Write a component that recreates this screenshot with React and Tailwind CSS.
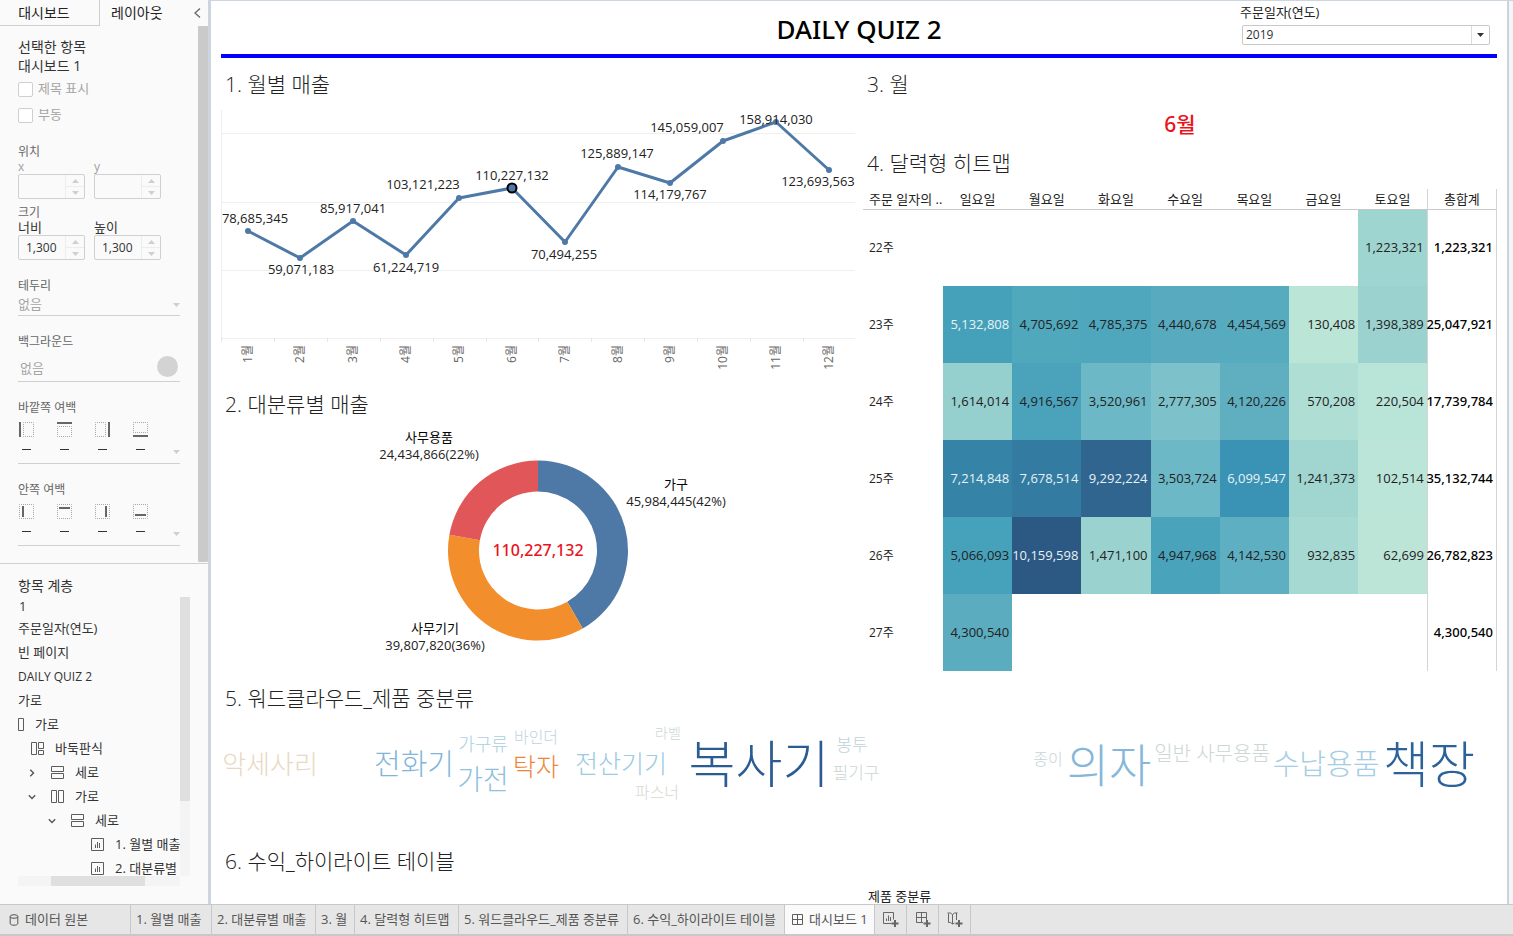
import React from "react";

const FONT = "font-['Open_Sans','Noto_Sans_CJK_KR',sans-serif]";
const MEDIUM = "font-['Noto_Sans','Noto_Sans_CJK_KR',sans-serif] font-medium";

/* ---------- data ---------- */

const MONTHS = [
  { x: 27, y: 121, label: "78,685,345", lx: 34, ly: 113 },
  { x: 79, y: 148, label: "59,071,183", lx: 80, ly: 164 },
  { x: 132, y: 111, label: "85,917,041", lx: 132, ly: 103 },
  { x: 185, y: 145, label: "61,224,719", lx: 185, ly: 162 },
  { x: 238, y: 88, label: "103,121,223", lx: 202, ly: 79 },
  { x: 291, y: 78, label: "110,227,132", lx: 291, ly: 70, selected: true },
  { x: 344, y: 132, label: "70,494,255", lx: 343, ly: 149 },
  { x: 397, y: 57, label: "125,889,147", lx: 396, ly: 48 },
  { x: 449, y: 73, label: "114,179,767", lx: 449, ly: 89 },
  { x: 502, y: 31, label: "145,059,007", lx: 466, ly: 22 },
  { x: 555, y: 12, label: "158,914,030", lx: 555, ly: 14 },
  { x: 608, y: 60, label: "123,693,563", lx: 597, ly: 76 },
];

const SLICES = [
  { from: 0, to: 150.2, color: "#4e79a7" },
  { from: 150.2, to: 280, color: "#f28e2b" },
  { from: 280, to: 360, color: "#e15759" },
];

const SLICE_LABELS = [
  { name: "사무용품", value: "24,434,866(22%)", x: 208, y: 12 },
  { name: "가구", value: "45,984,445(42%)", x: 455, y: 59 },
  { name: "사무기기", value: "39,807,820(36%)", x: 214, y: 203 },
];

const DAYS = ["일요일", "월요일", "화요일", "수요일", "목요일", "금요일", "토요일"];

const WEEKS = [
  { name: "22주", total: "1,223,321", cells: [null, null, null, null, null, null, ["1,223,321", "#9fd5d0"]] },
  {
    name: "23주", total: "25,047,921",
    cells: [["5,132,808", "#45a1ba", true], ["4,705,692", "#50a8bd"], ["4,785,375", "#4ea7bd"], ["4,440,678", "#58abbf"], ["4,454,569", "#57abbf"], ["130,408", "#bae5d7"], ["1,398,389", "#9bd2cf"]],
  },
  {
    name: "24주", total: "17,739,784",
    cells: [["1,614,014", "#96d0ce"], ["4,916,567", "#4aa3bb"], ["3,520,961", "#6db8c6"], ["2,777,305", "#7dc1ca"], ["4,120,226", "#5fafc1"], ["570,208", "#afded5"], ["220,504", "#b9e4d8"]],
  },
  {
    name: "25주", total: "35,132,744",
    cells: [["7,214,848", "#3584a8", true], ["7,678,514", "#347ba1", true], ["9,292,224", "#2f658f", true], ["3,503,724", "#6db8c6"], ["6,099,547", "#3a93b4", true], ["1,241,373", "#a0d5d0"], ["102,514", "#bbe5d8"]],
  },
  {
    name: "26주", total: "26,782,823",
    cells: [["5,066,093", "#46a1ba"], ["10,159,598", "#2c5884", true], ["1,471,100", "#9ad2cf"], ["4,947,968", "#49a3bb"], ["4,142,530", "#5eafc1"], ["932,835", "#a7d9d3"], ["62,699", "#bce5d8"]],
  },
  { name: "27주", total: "4,300,540", cells: [["4,300,540", "#5bacbf"], null, null, null, null, null, null] },
];

const WORDS = [
  { t: "악세사리", x: 49, y: 41, size: 26, c: "#e8d8c2" },
  { t: "전화기", x: 193, y: 41, size: 29, c: "#7fb5d9" },
  { t: "가구류", x: 262, y: 21, size: 18, c: "#a9cfe4" },
  { t: "가전", x: 262, y: 56, size: 28, c: "#8fc0de" },
  { t: "바인더", x: 315, y: 13, size: 16, c: "#c0d4da" },
  { t: "탁자", x: 315, y: 43, size: 25, c: "#ef8534" },
  { t: "전산기기", x: 400, y: 40, size: 25, c: "#9dcae3" },
  { t: "라벨", x: 447, y: 9, size: 14, c: "#ccd6d6" },
  { t: "파스너", x: 436, y: 68, size: 16, c: "#d8d8d2" },
  { t: "복사기", x: 538, y: 41, size: 51, c: "#2a5c93" },
  { t: "봉투", x: 631, y: 21, size: 17, c: "#bcd2da" },
  { t: "필기구", x: 635, y: 49, size: 17, c: "#cbd6d6" },
  { t: "종이", x: 827, y: 35, size: 16, c: "#c5d4d8" },
  { t: "의자", x: 888, y: 41, size: 46, c: "#85b7da" },
  { t: "일반 사무용품", x: 991, y: 30, size: 20, c: "#cdd6d5" },
  { t: "수납용품", x: 1105, y: 41, size: 29, c: "#a5cde3" },
  { t: "책장", x: 1208, y: 41, size: 50, c: "#2a6299" },
];

/* ---------- icons ---------- */

const Tri = ({ up, className = "" }) => (
  <svg viewBox="0 0 7 4" className={`h-1 w-[7px] ${className}`} fill="currentColor" aria-hidden="true">
    <path d={up ? "M0 4 3.5 0 7 4Z" : "M0 0h7L3.5 4Z"} />
  </svg>
);

const Glyph = ({ kind }) => (
  <svg viewBox="0 0 14 14" className="h-3.5 w-3.5 shrink-0" fill="none" stroke="#5c5c5c" aria-hidden="true">
    {kind === "cols" && <path d="M.5.5h5v12h-5zM7.5.5h5v12h-5z" />}
    {kind === "rows" && <path d="M.5.5h12v5H.5zM.5 7.500h12v5H.5z" />}
    {kind === "tiled" && <path d="M.5.5h5v12h-5zM7.5.5h5v6h-5zM7.500 8.500h5v4h-5z" />}
    {kind === "sheet" && <path d="M.5.5h12v12H.5zM4.500 10V6.500M6.500 10V4M8.500 10V5" />}
    {kind === "grid" && <path d="M1.500 1.500h10v10h-10zM6.500 1.500v10M1.500 6.500h10" />}
  </svg>
);

const Chevron = ({ down }) => (
  <svg viewBox="0 0 8 8" className="mr-[5px] h-2 w-2 shrink-0" fill="none" stroke="#555" strokeWidth="1.4" aria-hidden="true">
    <path d={down ? "M.8 2.300 4 5.500 7.200 2.300" : "M2.300.8 5.500 4 2.300 7.200"} />
  </svg>
);

const BOX = {
  outer: [
    { r: [4.5, 0.5, 10, 14], l: [0, 0, 2, 15] },
    { r: [0.5, 4.5, 14, 10], l: [0, 0, 15, 2] },
    { r: [0.5, 0.5, 10, 14], l: [13, 0, 2, 15] },
    { r: [0.5, 0.5, 14, 10], l: [0, 13, 15, 2] },
  ],
  inner: [
    { r: [0.5, 0.5, 14, 14], l: [3, 2, 2, 11] },
    { r: [0.5, 0.5, 14, 14], l: [2, 3, 11, 2] },
    { r: [0.5, 0.5, 14, 14], l: [10, 2, 2, 11] },
    { r: [0.5, 0.5, 14, 14], l: [2, 10, 11, 2] },
  ],
};

const NewIcon = ({ kind }) => (
  <svg viewBox="0 0 16 16" className="h-4 w-4" fill="none" stroke="#666" aria-hidden="true">
    {kind === "sheet" && <path d="M8.500 11.500h-8v-11h10v7M3.500 9V6.500M5.500 9V3.500M7.500 9V5" />}
    {kind === "dash" && <path d="M8 10.500H1.500v-10h10V8M6.500.5v10M1.500 5.500h10" />}
    {kind === "story" && <path d="M7.500 11 5.500 12 3.500 10.500h-2V1.500M.5 1h3l2 1.500 2-1.500h3M9.500 1v7M5.500 2.500V12" />}
    <path d="M12 8v7M8.500 11.500h7" strokeWidth="2" />
  </svg>
);

/* ---------- sidebar ---------- */

function Spin({ id, label, value, muted }) {
  return (
    <div className="flex w-[67px] flex-col">
      <label htmlFor={id} className={`h-[15px] leading-[15px] ${muted ? "text-xs text-[#a0a0a0]" : "text-[13px] text-[#333]"}`}>{label}</label>
      <div className="flex h-[25px] rounded-[2px] border border-[#d0d0d0]">
        <input id={id} defaultValue={value} disabled={muted} className="w-0 min-w-0 flex-1 bg-transparent pl-[7px] text-xs text-[#333]" />
        <div className="flex w-[19px] flex-col border-l border-[#ededed] text-[#cfcfcf]">
          <button aria-label={`${label} 증가`} className="flex flex-1 items-center justify-center border-b border-[#ededed]"><Tri up /></button>
          <button aria-label={`${label} 감소`} className="flex flex-1 items-center justify-center"><Tri /></button>
        </div>
      </div>
    </div>
  );
}

function Padding({ title, kind }) {
  return (
    <section className="mt-[17px] border-b border-[#d0d0d0]">
      <h3 className="h-[18px] text-xs leading-[18px] text-[#666]">{title}</h3>
      <div className="mt-[5px] flex gap-[23px] pl-px">
        {BOX[kind].map((b, i) => (
          <div key={i} className="flex w-[15px] flex-col items-center">
            <svg viewBox="0 0 15 15" className="h-[15px] w-[15px]" aria-hidden="true">
              <rect x={b.r[0]} y={b.r[1]} width={b.r[2]} height={b.r[3]} fill="none" stroke="#a8a8a8" strokeDasharray="1 1" strokeDashoffset="0.5" />
              <rect x={b.l[0]} y={b.l[1]} width={b.l[2]} height={b.l[3]} fill="#666" />
            </svg>
            <span className="mt-3 h-px w-[9px] bg-[#333]" />
          </div>
        ))}
      </div>
      <div className="flex h-[13px] justify-end text-[#cfcfcf]">
        <button aria-label={`${title} 펼치기`} className="h-1"><Tri className="block" /></button>
      </div>
    </section>
  );
}

const TREE = [
  { t: "1", pad: "pl-px" },
  { t: "주문일자(연도)", pad: "" },
  { t: "빈 페이지", pad: "" },
  { t: "DAILY QUIZ 2", pad: "text-xs" },
  { t: "가로", pad: "" },
  { t: "가로", pad: "-ml-[7px]", icon: "cols" },
  { t: "바둑판식", pad: "pl-[13px]", icon: "tiled" },
  { t: "세로", pad: "pl-2.5", icon: "rows", chev: "right" },
  { t: "가로", pad: "pl-2.5", icon: "cols", chev: "down" },
  { t: "세로", pad: "pl-[30px]", icon: "rows", chev: "down" },
  { t: "1. 월별 매출", pad: "pl-[73px]", icon: "sheet" },
  { t: "2. 대분류별", pad: "pl-[73px]", icon: "sheet" },
];

function Sidebar() {
  return (
    <aside className="flex w-[211px] shrink-0 flex-col border-r-[3px] border-[#cdd6de] bg-[#fafafa]">
      <div className="flex h-[26px] shrink-0 text-sm text-[#222]">
        <button className="w-[100px] border-r border-b border-[#cfcfcf] pr-[11px]">대시보드</button>
        <button className="ml-[11px]">레이아웃</button>
        <button aria-label="접기" className="ml-auto pr-[7px]">
          <svg viewBox="0 0 7 10" className="h-2.5 w-[7px]" fill="none" stroke="#666" strokeWidth="1.3"><path d="M6 .5 1 5l5 4.500" /></svg>
        </button>
      </div>

      <div className="flex h-[538px] shrink-0 border-b border-[#d0d0d0]">
        <div className="w-[180px] pt-[11px] pl-[18px]">
          <h2 className="h-[19px] text-sm leading-[19px] text-[#333]">선택한 항목</h2>
          <p className="h-[19px] text-sm leading-[19px] text-[#333]">대시보드 1</p>
          <label className="mt-1 flex h-[20px] items-center gap-[5px] text-[13px] text-[#a5a5a5]">
            <input type="checkbox" className="h-[15px] w-[15px] appearance-none rounded-[2px] border border-[#cfcfcf] bg-white" />제목 표시
          </label>
          <label className="mt-1.5 flex h-[20px] items-center gap-[5px] text-[13px] text-[#a5a5a5]">
            <input type="checkbox" className="h-[15px] w-[15px] appearance-none rounded-[2px] border border-[#cfcfcf] bg-white" />부동
          </label>
          <h3 className="mt-[18px] h-[16px] text-xs leading-[18px] text-[#666]">위치</h3>
          <div className="flex gap-[9px]">
            <Spin id="px" label="x" value="" muted />
            <Spin id="py" label="y" value="" muted />
          </div>
          <h3 className="mt-[5px] h-[16px] text-xs leading-[18px] text-[#666]">크기</h3>
          <div className="flex gap-[9px]">
            <Spin id="sw" label="너비" value="1,300" />
            <Spin id="sh" label="높이" value="1,300" />
          </div>
          <label htmlFor="bd" className="mt-[17px] block h-[18px] text-xs leading-[18px] text-[#666]">테두리</label>
          <div className="grid h-[21px] items-center border-b border-[#d0d0d0]">
            <select id="bd" className="col-start-1 row-start-1 w-full appearance-none bg-transparent text-[13px] text-[#a5a5a5]"><option>없음</option></select>
            <Tri className="pointer-events-none col-start-1 row-start-1 justify-self-end text-[#cfcfcf]" />
          </div>
          <h3 className="mt-[17px] h-[18px] text-xs leading-[18px] text-[#666]">백그라운드</h3>
          <button className="flex h-[31px] w-full items-center justify-between border-b border-[#d0d0d0] px-0.5 text-[13px] text-[#a5a5a5]">
            <span className="pt-1.5">없음</span>
            <span className="h-[21px] w-[21px] rounded-full bg-[#d3d3d3]" />
          </button>
          <Padding title="바깥쪽 여백" kind="outer" />
          <Padding title="안쪽 여백" kind="inner" />
        </div>
        <div className="mb-px ml-auto w-2.5 rounded-b-[1px] bg-[#cacaca]" />
      </div>

      <div className="flex min-h-0 flex-1 flex-col pt-3.5 pl-[18px]">
        <h2 className="h-[19px] text-sm leading-4 text-[#333]">항목 계층</h2>
        <div className="flex h-[279px]">
          <ul className="w-[162px] overflow-hidden text-[13px] whitespace-nowrap text-[#333]">
            {TREE.map((n, i) => (
              <li key={i} className={`flex items-center gap-2.5 ${i === 0 ? "h-5" : "h-6"} ${n.pad}`}>
                {n.chev && <Chevron down={n.chev === "down"} />}
                {n.icon && <Glyph kind={n.icon} />}
                <span>{n.t}</span>
              </li>
            ))}
          </ul>
          <div className="w-2.5 bg-[#f4f4f4]"><div className="h-[204px] bg-[#dfdfdf]" /></div>
        </div>
        <div className="h-2.5 w-[162px] bg-[#f4f4f4] pl-[33px]"><div className="h-2.5 w-[94px] bg-[#dfdfdf]" /></div>
      </div>
    </aside>
  );
}

/* ---------- charts ---------- */

const H2 = ({ children }) => (
  <h2 className="flex h-[50px] items-center pl-1 text-[21px] font-light text-[#222]">{children}</h2>
);

function LineChart() {
  return (
    <svg viewBox="0 0 634 270" className="block w-full" role="img" aria-label="월별 매출">
      <path d="M0 23.500H634M0 92.500H634M0 160.500H634M0 228.500H634M.5 0V228" stroke="#efefef" fill="none" />
      {MONTHS.map((m, i) => (
        <path key={i} d={`M${Math.round(i * 52.9) + 0.5} 228v4`} stroke="#e6e6e6" />
      ))}
      <polyline points={MONTHS.map((m) => `${m.x},${m.y}`).join(" ")} fill="none" stroke="#4e79a7" strokeWidth="3" strokeLinejoin="round" />
      {MONTHS.map((m) => (
        <circle key={m.x} cx={m.x} cy={m.y} r={m.selected ? 4.5 : 3} fill="#4e79a7" stroke={m.selected ? "#000" : "none"} strokeWidth="2" />
      ))}
      {MONTHS.map((m) => (
        <text key={m.x} x={m.lx} y={m.ly} textAnchor="middle" fontSize="13" fill="#222">{m.label}</text>
      ))}
      {MONTHS.map((m, i) => (
        <text key={m.x} transform={`translate(${m.x + 4} 235) rotate(-90)`} textAnchor="end" fontSize="12" fill="#666">{`${i + 1}월`}</text>
      ))}
    </svg>
  );
}

function arc({ from, to }) {
  const p = (a, r) => {
    const t = ((a - 90) * Math.PI) / 180;
    return `${317 + r * Math.cos(t)} ${120.5 + r * Math.sin(t)}`;
  };
  const big = to - from > 180 ? 1 : 0;
  return `M${p(from, 90)}A90 90 0 ${big} 1 ${p(to, 90)}L${p(to, 59)}A59 59 0 ${big} 0 ${p(from, 59)}Z`;
}

function Donut() {
  return (
    <svg viewBox="0 0 634 244" className="block w-full overflow-visible" role="img" aria-label="대분류별 매출">
      {SLICES.map((s) => <path key={s.color} d={arc(s)} fill={s.color} />)}
      <text x="317" y="126" textAnchor="middle" fontSize="16" className={MEDIUM} fill="#e8141c">110,227,132</text>
      {SLICE_LABELS.map((l) => (
        <g key={l.name} textAnchor="middle" fontSize="13" fill="#222">
          <text x={l.x} y={l.y} fill="#000">{l.name}</text>
          <text x={l.x} y={l.y + 17}>{l.value}</text>
        </g>
      ))}
    </svg>
  );
}

function Heatmap() {
  return (
    <table className="w-full table-fixed border-collapse text-[13px] whitespace-nowrap text-[#222]">
      <thead>
        <tr className="h-5 border-b border-[#c8c8c8] leading-[18px]">
          <th className="w-20 p-0 pl-1.5 text-left font-normal">주문 일자의 ..</th>
          {DAYS.map((d) => <th key={d} className="p-0 font-normal">{d}</th>)}
          <th className="border-x border-[#d4d4d4] p-0 font-normal">총합계</th>
        </tr>
      </thead>
      <tbody>
        {WEEKS.map((w) => (
          <tr key={w.name} className="h-[77px]">
            <th className="p-0 pl-1.5 text-left text-xs font-normal">{w.name}</th>
            {w.cells.map((c, i) => (
              <td key={i} style={c ? { backgroundColor: c[1] } : undefined} className={`p-0 pr-[3px] text-right ${c && c[2] ? "text-[#e8f2f6]" : "text-[#222]"}`}>
                {c ? c[0] : ""}
              </td>
            ))}
            <td className={`border-x border-[#d4d4d4] p-0 pr-[3px] text-black ${MEDIUM}`}><div className="flex justify-end">{w.total}</div></td>
          </tr>
        ))}
      </tbody>
    </table>
  );
}

function WordCloud() {
  return (
    <svg viewBox="0 0 1276 113" className="block w-full" role="img" aria-label="제품 중분류">
      {WORDS.map((w) => (
        <text key={w.t} x={w.x} y={w.y + Math.round(w.size * 0.36)} textAnchor="middle" fontSize={w.size} fontWeight="300" fill={w.c}>{w.t}</text>
      ))}
    </svg>
  );
}

/* ---------- page ---------- */

const TABS = [
  ["1. 월별 매출", "w-[81px]"],
  ["2. 대분류별 매출", "w-[104px]"],
  ["3. 월", "w-[39px]"],
  ["4. 달력형 히트맵", "w-[104px]"],
  ["5. 워드클라우드_제품 중분류", "w-[169px]"],
  ["6. 수익_하이라이트 테이블", "w-[157px]"],
];

export default function App() {
  return (
    <div className={`flex h-screen flex-col overflow-hidden bg-white ${FONT}`}>
      <div className="flex min-h-0 flex-1">
        <Sidebar />
        <main className="min-w-0 flex-1 overflow-hidden border-t border-[#cdd6de] bg-[#f4f5f6] pr-1">
          <div className="min-h-full border-r-2 border-[#cdd3da] bg-white px-2.5">
            <header className="grid h-[57px] grid-cols-[1fr_auto_1fr] border-b-4 border-[#0000ff]">
              <h1 className={`col-start-2 self-center pt-0.5 text-[26px] leading-8 text-black ${MEDIUM}`}>DAILY QUIZ 2</h1>
              <div className="flex w-[257px] flex-col justify-self-end pt-0.5 pr-[7px]">
                <label htmlFor="year" className="h-[18px] text-[13px] leading-[18px] text-[#222]">주문일자(연도)</label>
                <div className="mt-1 ml-0.5 grid h-5 grid-cols-[1fr_18px] rounded-[2px] border border-[#c8c8c8]">
                  <select id="year" className="col-span-2 col-start-1 row-start-1 appearance-none bg-transparent pl-[3px] text-xs text-[#333]"><option>2019</option></select>
                  <span className="pointer-events-none col-start-2 row-start-1 flex items-center justify-center border-l border-[#dcdcdc] text-[#333]"><Tri /></span>
                </div>
              </div>
            </header>
            <div className="grid grid-cols-2 gap-2 pt-0.5">
              <section>
                <H2>1. 월별 매출</H2>
                <LineChart />
                <H2>2. 대분류별 매출</H2>
                <Donut />
              </section>
              <section>
                <H2>3. 월</H2>
                <p className={`flex h-[29px] items-center justify-center text-[21px] text-[#e8141c] ${MEDIUM}`}>6월</p>
                <H2>4. 달력형 히트맵</H2>
                <Heatmap />
              </section>
            </div>
            <H2>5. 워드클라우드_제품 중분류</H2>
            <WordCloud />
            <H2>6. 수익_하이라이트 테이블</H2>
            <div className="grid grid-cols-2 gap-2 text-[13px] leading-[18px] text-[#222]">
              <span className="col-start-2 pl-[5px]">제품 중분류</span>
            </div>
          </div>
        </main>
      </div>

      <nav className="flex h-8 shrink-0 border-y border-b-2 border-[#c8c8c8] bg-[#e6e6e6] text-[13px] whitespace-nowrap text-[#555]">
        <button className="flex w-[131px] items-center gap-1.5 border-r border-[#c8c8c8] pl-[9px]">
          <svg viewBox="0 0 10 12" className="h-3 w-2.5" fill="none" stroke="#555" aria-hidden="true">
            <ellipse cx="5" cy="2.500" rx="3.800" ry="1.800" />
            <path d="M1.200 2.500v7c0 2.300 7.600 2.300 7.600 0v-7" />
          </svg>
          데이터 원본
        </button>
        {TABS.map(([t, w]) => (
          <button key={t} className={`shrink-0 border-r border-[#c8c8c8] pl-[5px] text-left ${w}`}>{t}</button>
        ))}
        <button className="flex w-[90px] items-center gap-1 border-r border-[#c8c8c8] bg-[#fafafa] pl-1.5"><Glyph kind="grid" />대시보드 1</button>
        <button aria-label="새 워크시트" className="flex w-8 items-center justify-center border-r border-[#c8c8c8]"><NewIcon kind="sheet" /></button>
        <button aria-label="새 대시보드" className="flex w-8 items-center justify-center border-r border-[#c8c8c8]"><NewIcon kind="dash" /></button>
        <button aria-label="새 스토리" className="flex w-8 items-center justify-center border-r border-[#c8c8c8]"><NewIcon kind="story" /></button>
      </nav>
    </div>
  );
}
